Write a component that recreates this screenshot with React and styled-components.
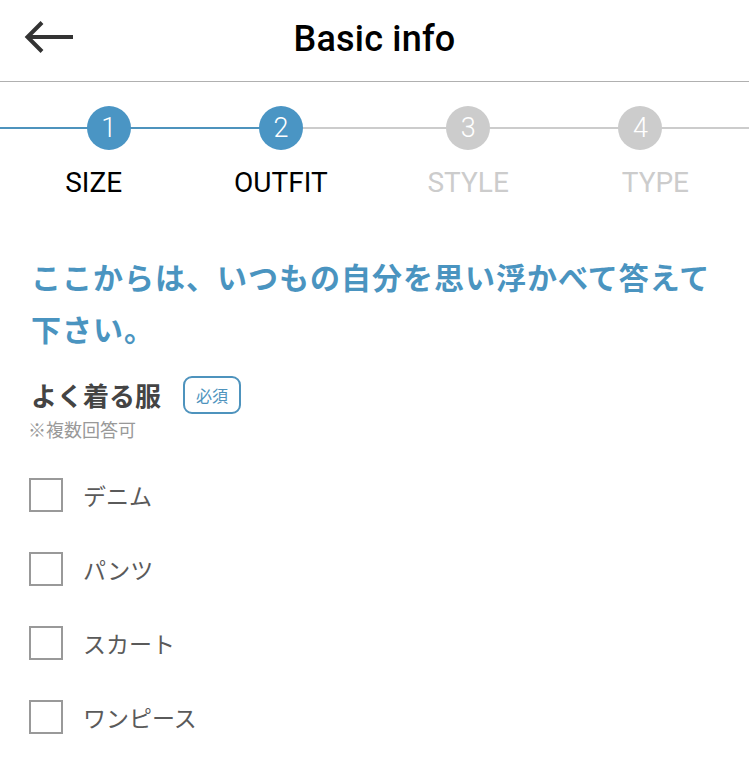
import React from 'react';
import styled, { createGlobalStyle } from 'styled-components';

const GlobalStyle = createGlobalStyle`
  body {
    margin: 0;
    background: #ffffff;
    font-family: Roboto, "Noto Sans CJK JP", sans-serif;
  }
`;

const steps = [
  { num: 1, label: 'SIZE', done: true, shift: 15 },
  { num: 2, label: 'OUTFIT', done: true, shift: 0 },
  { num: 3, label: 'STYLE', done: false, shift: 0 },
  { num: 4, label: 'TYPE', done: false, shift: -15 },
];

const options = ['デニム', 'パンツ', 'スカート', 'ワンピース'];

const BackIcon = () => (
  <svg width="50" height="34" viewBox="0 0 50 34" fill="none">
    <path d="M49 17H4" stroke="#333" strokeWidth="4" />
    <path d="M18 2.5L3.5 17L18 31.5" stroke="#333" strokeWidth="4" />
  </svg>
);

const App = () => {
  return (
    <Page>
      <GlobalStyle />
      <Header>
        <BackButton>
          <BackIcon />
        </BackButton>
        <Title>Basic info</Title>
      </Header>

      <Stepper>
        <CircleRow>
          {steps.map((step) => (
            <StepCell key={step.num}>
              <Circle done={step.done} style={{ transform: `translateX(${step.shift}px)` }}>
                {step.num}
              </Circle>
            </StepCell>
          ))}
        </CircleRow>
        <LabelRow>
          {steps.map((step) => (
            <StepLabel key={step.num} done={step.done}>
              {step.label}
            </StepLabel>
          ))}
        </LabelRow>
      </Stepper>

      <Content>
        <Lead>ここからは、いつもの自分を思い浮かべて答えて下さい。</Lead>

        <QuestionHead>
          <QuestionTitle>よく着る服</QuestionTitle>
          <Badge>必須</Badge>
        </QuestionHead>
        <Note>※複数回答可</Note>

        <OptionList>
          {options.map((opt) => (
            <Option key={opt}>
              <Box />
              <OptionText>{opt}</OptionText>
            </Option>
          ))}
        </OptionList>
      </Content>
    </Page>
  );
};

export default App;

const Page = styled.div`
  width: 749px;
  min-height: 760px;
  background: #ffffff;
`;

const Header = styled.header`
  position: relative;
  box-sizing: border-box;
  height: 82px;
  padding-bottom: 4px;
  display: flex;
  align-items: center;
  justify-content: center;
  border-bottom: 1px solid #b0b0b0;
`;

const BackButton = styled.div`
  position: absolute;
  left: 24px;
  top: 20px;
  display: flex;
`;

const Title = styled.h1`
  margin: 0;
  font-family: Roboto, sans-serif;
  font-weight: 500;
  font-size: 36px;
  color: #000000;
  letter-spacing: 0.2px;
`;

const Stepper = styled.div`
  padding-top: 24px;
`;

const CircleRow = styled.div`
  display: grid;
  grid-template-columns: repeat(4, 1fr);
  background:
    linear-gradient(#4e93bd, #4e93bd) 0 center / 281px 2px no-repeat,
    linear-gradient(#cccccc, #cccccc) 0 center / 100% 2px no-repeat;
`;

const StepCell = styled.div`
  display: flex;
  justify-content: center;
`;

const Circle = styled.div`
  width: 44px;
  height: 44px;
  border-radius: 50%;
  background: ${(p) => (p.done ? '#4a95c4' : '#cccccc')};
  color: #ffffff;
  display: flex;
  align-items: center;
  justify-content: center;
  font-family: Roboto, sans-serif;
  font-weight: 300;
  font-size: 27px;
`;

const LabelRow = styled.div`
  display: grid;
  grid-template-columns: repeat(4, 1fr);
  margin-top: 16px;
`;

const StepLabel = styled.div`
  text-align: center;
  font-family: Roboto, sans-serif;
  font-size: 28px;
  line-height: 34px;
  color: ${(p) => (p.done ? '#000000' : '#cccccc')};
`;

const Content = styled.div`
  padding: 50px 30px 0 31px;
`;

const Lead = styled.p`
  margin: 0;
  font-family: "Noto Sans CJK JP", sans-serif;
  font-weight: 700;
  font-size: 30px;
  letter-spacing: 1px;
  line-height: 52px;
  color: #4a94c0;
`;

const QuestionHead = styled.div`
  display: flex;
  align-items: center;
  gap: 22px;
  margin-top: 22px;
`;

const QuestionTitle = styled.h2`
  margin: 0;
  font-family: "Noto Sans CJK JP", sans-serif;
  font-weight: 700;
  font-size: 26px;
  line-height: 38px;
  color: #444444;
`;

const Badge = styled.span`
  box-sizing: border-box;
  width: 58px;
  height: 38px;
  border: 2px solid #4e93bd;
  border-radius: 9px;
  display: flex;
  align-items: center;
  justify-content: center;
  font-family: "Noto Sans CJK JP", sans-serif;
  font-size: 16px;
  color: #4e93bd;
`;

const Note = styled.div`
  font-family: "Noto Sans CJK JP", sans-serif;
  font-size: 18px;
  line-height: 24px;
  color: #999999;
  margin-left: -3px;
  margin-top: 3px;
`;

const OptionList = styled.div`
  display: flex;
  flex-direction: column;
  gap: 40px;
  margin-top: 37px;
`;

const Option = styled.label`
  display: flex;
  align-items: center;
  gap: 20px;
`;

const Box = styled.span`
  box-sizing: border-box;
  width: 34px;
  height: 34px;
  margin-left: -2px;
  border: 2px solid #999999;
  background: #ffffff;
`;

const OptionText = styled.span`
  font-family: "Noto Sans CJK JP", sans-serif;
  font-size: 23px;
  font-weight: 400;
  color: #5a5a5a;
`;
